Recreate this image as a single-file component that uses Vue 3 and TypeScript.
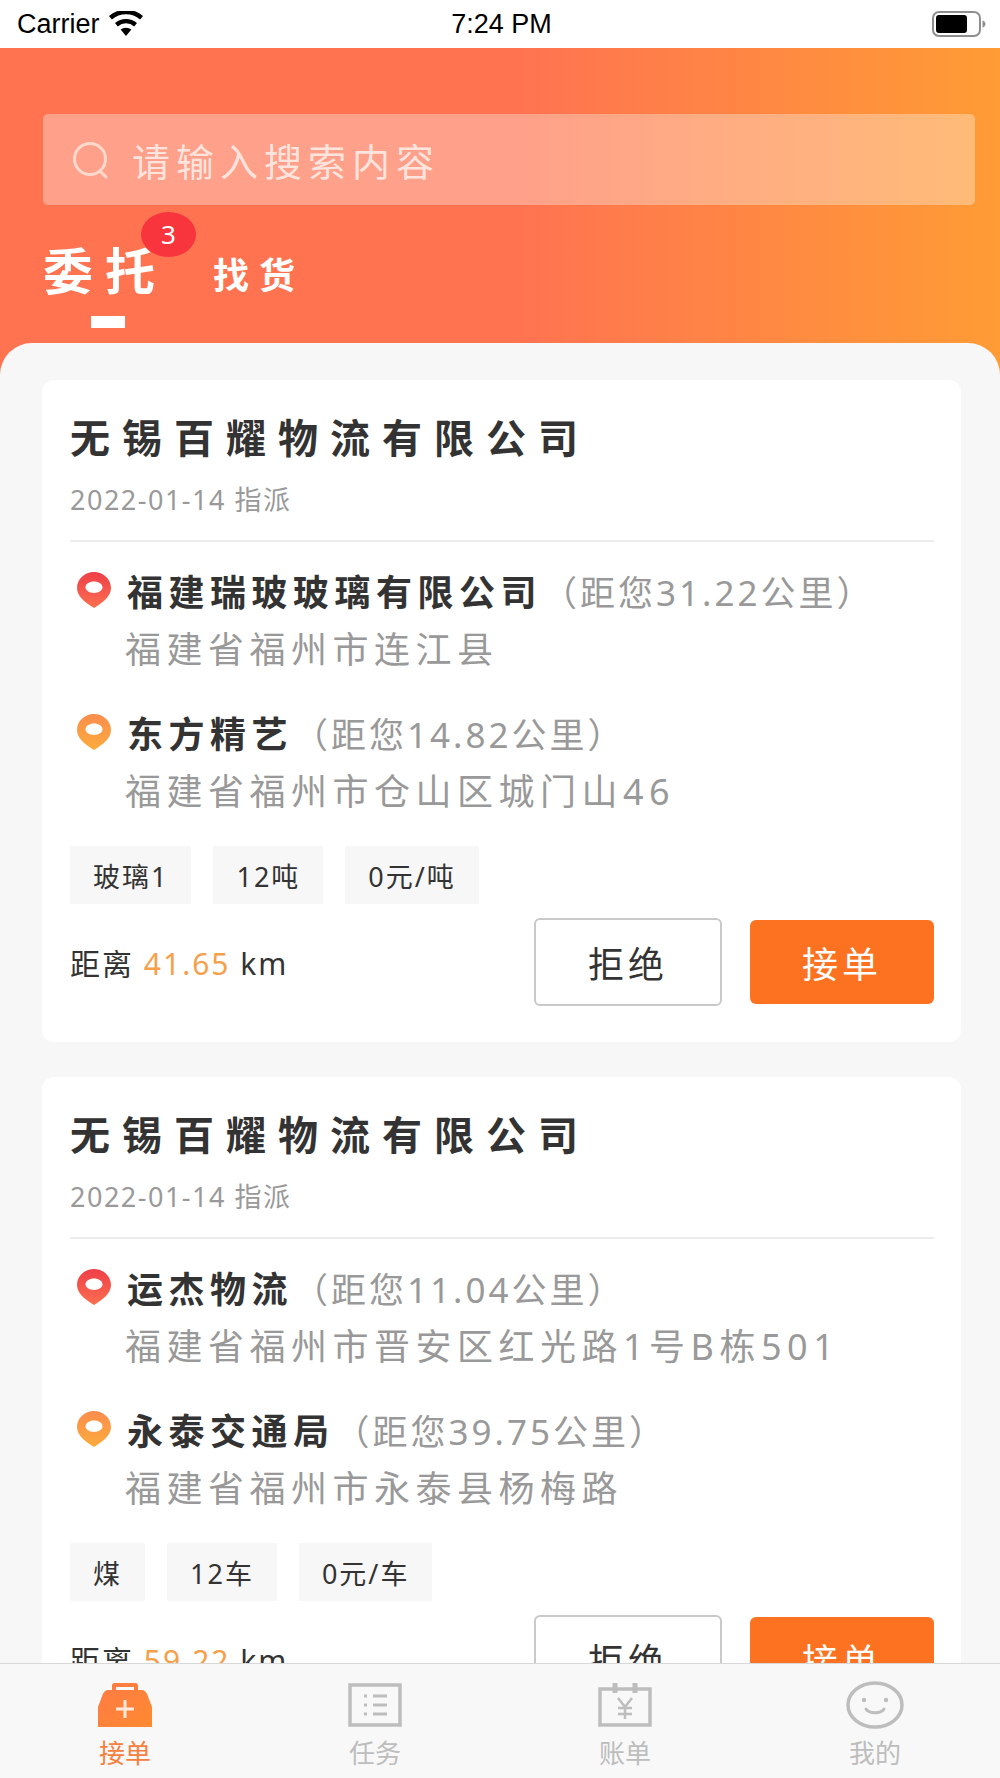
<template>
  <div class="page">
    <div class="status-bar">
      <div class="status-left">
        <span>Carrier</span>
        <svg class="wifi" viewBox="0 0 36 26" width="36" height="26">
          <path d="M18 25 12.6 18.6a8.4 8.4 0 0 1 10.8 0Z" fill="#000" />
          <path d="M9.8 15.4a12.6 12.6 0 0 1 16.4 0l2.8-3.3a17 17 0 0 0-22 0Z" fill="#000" />
          <path d="M3.9 8.4a21.8 21.8 0 0 1 28.2 0L35 5A26 26 0 0 0 1 5Z" fill="#000" />
        </svg>
      </div>
      <span class="status-time">7:24 PM</span>
      <svg class="battery" viewBox="0 0 54 28" width="54" height="28">
        <rect x="1" y="2" width="47" height="24" rx="6" fill="none" stroke="#8e8e8e" stroke-width="2" />
        <rect x="4" y="5" width="31" height="18" rx="3" fill="#000" />
        <path d="M50.5 10.5c2 .6 3 2 3 3.5s-1 2.900-3 3.500Z" fill="#8e8e8e" />
      </svg>
    </div>

    <div class="body">
      <div class="header">
        <div class="search">
          <svg viewBox="0 0 42 38" width="42" height="38">
            <circle cx="20" cy="18" r="15.500" fill="none" stroke="#ffd9cc" stroke-width="3" />
            <path d="M30 30l6 6" fill="none" stroke="#ffd9cc" stroke-width="3" stroke-linecap="round" />
          </svg>
          <span>请输入搜索内容</span>
        </div>
        <div class="tabs">
          <div class="tab active">
            委托
            <span class="badge">3</span>
            <i class="tab-line"></i>
          </div>
          <div class="tab">找货</div>
        </div>
      </div>

      <div class="content">
        <div v-for="(order, index) in orders" :key="index" class="card">
          <div class="company">无锡百耀物流有限公司</div>
          <div class="date">2022-01-14 指派</div>
          <div class="stops">
            <div v-for="(stop, i) in order.stops" :key="i" class="stop">
              <div class="stop-title">
                <svg class="pin" viewBox="0 0 34 36" width="34" height="36">
                  <path :fill="i === 0 ? 'url(#pinRed)' : 'url(#pinOrange)'" fill-rule="evenodd"
                    d="M17 0C7.600 0 0 7.200 0 16c0 7 6 13.500 17 20 11-6.500 17-13 17-20C34 7.200 26.400 0 17 0Zm0 9.500c4.700 0 8.500 2.600 8.500 5.800S21.700 21 17 21s-8.500-2.500-8.500-5.700S12.300 9.500 17 9.500Z" />
                </svg>
                <b>{{ stop.name }}</b>
                <span class="away">（距您{{ stop.away }}公里）</span>
              </div>
              <div class="address">{{ stop.address }}</div>
            </div>
          </div>
          <div class="tags">
            <span v-for="tag in order.tags" :key="tag" class="tag">{{ tag }}</span>
          </div>
          <div class="card-bottom">
            <div class="distance">距离 <em>{{ order.distance }}</em> km</div>
            <div class="actions">
              <button class="btn reject">拒绝</button>
              <button class="btn accept">接单</button>
            </div>
          </div>
        </div>
      </div>
    </div>

    <div class="tabbar">
      <div class="tabbar-item on">
        <svg viewBox="0 0 54 44" width="54" height="44">
          <defs>
            <linearGradient id="bagFill" x1="0" y1="0" x2="1" y2="1">
              <stop offset="0" stop-color="#ff7a45" />
              <stop offset="1" stop-color="#ff8a30" />
            </linearGradient>
            <linearGradient id="pinRed" x1="0" y1="0" x2="0" y2="1">
              <stop offset="0" stop-color="#ee3f48" />
              <stop offset="1" stop-color="#fb6f50" />
            </linearGradient>
            <linearGradient id="pinOrange" x1="0" y1="0" x2="0" y2="1">
              <stop offset="0" stop-color="#fb8d4d" />
              <stop offset="1" stop-color="#fcab3c" />
            </linearGradient>
          </defs>
          <path fill="url(#bagFill)"
            d="M14 7V2.500C14 1 15 0 16.500 0h21C39 0 40 1 40 2.500V7h3c3.500 0 5 1.500 6.500 5l4.500 12v20H0V24l4.500-12C6 8.500 7.500 7 11 7Zm4-3v3h18V4Z" />
          <path d="M25.500 17h3v7.500H36v3h-7.500V35h-3v-7.500H18v-3h7.500Z" fill="#ffe9dc" />
        </svg>
        <span>接单</span>
      </div>
      <div class="tabbar-item">
        <svg viewBox="0 0 54 44" width="54" height="44" fill="none" stroke="#bdbdbd">
          <rect x="2" y="2" width="50" height="40" stroke-width="3.500" />
          <path d="M25 13h14M25 22h14M25 31h14" stroke-width="3" />
          <path d="M16 13h3M16 22h3M16 31h3" stroke-width="3" />
        </svg>
        <span>任务</span>
      </div>
      <div class="tabbar-item">
        <svg viewBox="0 0 54 44" width="54" height="44" fill="none" stroke="#bdbdbd">
          <path d="M2 6h50v36H2Z" stroke-width="3.500" />
          <path d="M17 0v10M37 0v10" stroke-width="5" />
          <path d="M20 15l7 9 7-9M27 24v12M20 25h14M20 31h14" stroke-width="2.500" />
        </svg>
        <span>账单</span>
      </div>
      <div class="tabbar-item">
        <svg viewBox="0 0 58 48" width="58" height="48" fill="none" stroke="#bdbdbd">
          <ellipse cx="29" cy="24" rx="27" ry="22" stroke-width="3.500" />
          <circle cx="18" cy="19" r="2.200" fill="#bdbdbd" stroke="none" />
          <circle cx="40" cy="19" r="2.200" fill="#bdbdbd" stroke="none" />
          <path d="M20 28c3 5 15 5 18 0" stroke-width="3" stroke-linecap="round" />
        </svg>
        <span>我的</span>
      </div>
    </div>
  </div>
</template>

<script setup lang="ts">
interface Stop {
  name: string;
  away: string;
  address: string;
}

interface Order {
  stops: Stop[];
  tags: string[];
  distance: string;
}

const orders: Order[] = [
  {
    stops: [
      { name: '福建瑞玻玻璃有限公司', away: '31.22', address: '福建省福州市连江县' },
      { name: '东方精艺', away: '14.82', address: '福建省福州市仓山区城门山46' },
    ],
    tags: ['玻璃1', '12吨', '0元/吨'],
    distance: '41.65',
  },
  {
    stops: [
      { name: '运杰物流', away: '11.04', address: '福建省福州市晋安区红光路1号B栋501' },
      { name: '永泰交通局', away: '39.75', address: '福建省福州市永泰县杨梅路' },
    ],
    tags: ['煤', '12车', '0元/车'],
    distance: '59.22',
  },
];
</script>

<style>
html,
body {
  margin: 0;
  background: #fff;
}
</style>

<style scoped>
.page {
  width: 1000px;
  height: 1778px;
  display: flex;
  flex-direction: column;
  overflow: hidden;
  font-family: "Noto Sans", "Noto Sans CJK SC", sans-serif;
  color: #333;
}

.status-bar {
  height: 48px;
  flex: none;
  padding: 0 14px 0 17px;
  display: grid;
  grid-template-columns: 1fr auto 1fr;
  align-items: center;
  background: #fff;
  color: #000;
  font-family: "Liberation Sans", sans-serif;
  font-size: 27px;
}

.status-left {
  display: flex;
  align-items: center;
  gap: 8px;
}

.status-time {
  font-weight: 500;
}

.battery {
  justify-self: end;
}

.body {
  flex: 1;
  min-height: 0;
  overflow: hidden;
  background: #f7f7f7;
}

.header {
  height: 342px;
  padding: 66px 25px 0 43px;
  box-sizing: border-box;
  background: linear-gradient(90deg, #ff7351 0%, #ff7351 52%, #ff9c35 100%);
  color: #fff;
}

.search {
  height: 91px;
  padding-left: 27px;
  display: flex;
  align-items: center;
  gap: 20px;
  border-radius: 5px;
  background: rgba(255, 255, 255, 0.33);
  color: rgba(255, 255, 255, 0.72);
  font-size: 38px;
  letter-spacing: 6px;
}

.tabs {
  margin-top: 36px;
  display: flex;
  align-items: flex-end;
  gap: 46px;
}

.tab {
  position: relative;
  font-size: 36px;
  font-weight: 700;
  letter-spacing: 10px;
  line-height: 50px;
}

.tab.active {
  font-size: 50px;
  letter-spacing: 12px;
  line-height: 60px;
}

.badge {
  position: absolute;
  left: 98px;
  top: -29px;
  width: 55px;
  height: 45px;
  border-radius: 50%;
  background: #f8343c;
  font-size: 26px;
  font-weight: 400;
  letter-spacing: 0;
  line-height: 45px;
  text-align: center;
}

.tab-line {
  position: absolute;
  left: 48px;
  top: 75px;
  width: 34px;
  height: 12px;
  background: #fff;
}

.content {
  margin-top: -47px;
  position: relative;
  height: 1400px;
  padding: 37px 39px 0 42px;
  box-sizing: border-box;
  border-radius: 32px 32px 0 0;
  background: #f7f7f7;
}

.card {
  height: 662px;
  margin-bottom: 35px;
  padding: 28px 27px 0 28px;
  box-sizing: border-box;
  border-radius: 12px;
  background: #fff;
}

.company {
  font-size: 40px;
  font-weight: 700;
  letter-spacing: 12px;
  line-height: 60px;
}

.date {
  margin-top: 12px;
  padding-bottom: 20px;
  border-bottom: 2px solid #ececec;
  color: #999;
  font-size: 27px;
  letter-spacing: 1.500px;
  line-height: 40px;
}

.stops {
  padding-top: 18px;
}

.stop {
  height: 142px;
}

.stop-title {
  display: flex;
  align-items: center;
  height: 60px;
  white-space: nowrap;
  font-size: 36px;
  letter-spacing: 5.500px;
}

.pin {
  margin: 0 16px 0 7px;
  flex: none;
}

.away {
  color: #999;
  font-size: 35px;
  letter-spacing: 3px;
}

.address {
  margin-left: 55px;
  color: #999;
  font-size: 36px;
  letter-spacing: 5.500px;
  line-height: 60px;
}

.tags {
  margin-top: 2px;
  display: flex;
  gap: 22px;
}

.tag {
  height: 58px;
  padding: 0 23px;
  display: flex;
  align-items: center;
  background: #f7f7f7;
  font-size: 27px;
  letter-spacing: 2px;
}

.card-bottom {
  margin-top: 14px;
  display: flex;
  align-items: center;
  justify-content: space-between;
}

.distance {
  font-size: 30px;
  letter-spacing: 2px;
}

.distance em {
  color: #f5a04a;
  font-style: normal;
}

.actions {
  display: flex;
  align-items: center;
  gap: 28px;
}

.btn {
  padding: 0;
  font-family: inherit;
  font-size: 36px;
  letter-spacing: 4px;
  border-radius: 6px;
}

.reject {
  width: 188px;
  height: 88px;
  border: 2px solid #c9c9c9;
  background: #fff;
  color: #333;
}

.accept {
  width: 184px;
  height: 84px;
  border: 0;
  background: #fd7220;
  color: #fff;
}

.tabbar {
  height: 115px;
  flex: none;
  position: relative;
  box-sizing: border-box;
  display: grid;
  grid-template-columns: repeat(4, 1fr);
  border-top: 1px solid #d8d8d8;
  background: #f8f8f8;
}

.tabbar-item {
  padding-top: 17px;
  display: flex;
  flex-direction: column;
  align-items: center;
  justify-content: flex-start;
  color: #bdbdbd;
  font-size: 26px;
  line-height: 36px;
}

.tabbar-item svg {
  height: 48px;
}

.tabbar-item span {
  margin-top: 6px;
}

.tabbar-item.on {
  color: #f5803e;
}
</style>
